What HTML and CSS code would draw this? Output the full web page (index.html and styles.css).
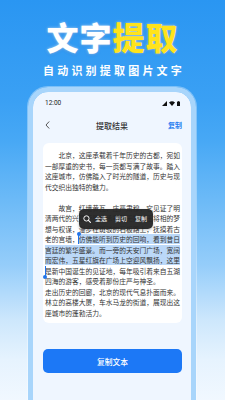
FILE: index.html
```html
<!DOCTYPE html>
<html lang="zh-CN">
<head>
<meta charset="utf-8">
<title>文字提取</title>
<link rel="stylesheet" href="styles.css">
</head>
<body>
<div class="page">
  <header class="hero">
    <h1 class="title">文字<span class="hl">提取</span></h1>
    <p class="subtitle">自动识别提取图片文字</p>
  </header>
  <div class="phone">
    <div class="screen">
      <div class="status">
        <span class="time">12:00</span>
        <span class="status-icons">
          <svg width="5" height="5" viewBox="0 0 10 10"><path d="M10 0V10H0Z" fill="#111"/></svg>
          <svg width="6" height="5" viewBox="0 0 12 10"><path d="M0 3Q6 -2 12 3L6 10Z" fill="#111"/></svg>
          <svg width="3" height="5" viewBox="0 0 6 10"><rect x="0" y="1.2" width="6" height="8.8" rx="1" fill="#111"/><rect x="2" y="0" width="2" height="1.4" fill="#111"/></svg>
        </span>
      </div>
      <div class="nav">
        <svg class="back" width="5" height="8" viewBox="0 0 5 8"><path d="M4.2 0.5L1 4L4.2 7.5" fill="none" stroke="#444" stroke-width="0.9"/></svg>
        <span class="nav-title">提取结果</span>
        <span class="nav-action">复制</span>
      </div>
      <div class="card">
        <p class="para indent">北京，这座承载着千年历史的古都，宛如一部厚重的史书，每一页都写满了故事。踏入这座城市，仿佛踏入了时光的隧道，历史与现代交织出独特的魅力。</p>
        <p class="para indent gap">故宫，红墙黄瓦，庄严肃穆，它见证了明清两代的兴衰荣辱，承载着无数帝王将相的梦想与权谋，漫步在斑驳的石板路上，抚摸着古老的宫墙，<span class="caret caret-start"></span><span class="sel">仿佛能听到历史的回响，看到昔日宫廷的繁华盛景。而一旁的天安门广场，宽阔而宏伟，五星红旗在广场上空迎风飘扬，这里</span><span class="caret caret-end"></span>是新中国诞生的见证地，每年吸引着来自五湖四海的游客，感受着那份庄严与神圣。</p>
        <p class="para">走出历史的回廊，北京的现代气息扑面而来。林立的高楼大厦，车水马龙的街道，展现出这座城市的蓬勃活力。</p>
        <div class="popup">
          <svg class="search" width="8" height="8" viewBox="0 0 10 10"><circle cx="4.3" cy="4.3" r="3.3" fill="none" stroke="#fff" stroke-width="1.2"/><path d="M6.8 6.8L9.3 9.3" stroke="#fff" stroke-width="1.3" stroke-linecap="round"/></svg>
          <span class="pop-item">全选</span>
          <span class="pop-item">剪切</span>
          <span class="pop-item">复制</span>
        </div>
      </div>
      <button class="copy-btn">复制文本</button>
    </div>
  </div>
</div>
</body>
</html>
```

FILE: styles.css
```css
* { box-sizing: border-box; }
html, body { margin: 0; padding: 0; }
body {
  width: 225px;
  height: 400px;
  overflow: hidden;
  font-family: "Noto Sans CJK SC", "Noto Sans", sans-serif;
}
.page {
  width: 225px;
  height: 400px;
  overflow: hidden;
  background: linear-gradient(180deg, #2a96f2 0px, #3aa0f4 100px, #47a8f5 140px, #6cbaf7 200px, #95cdfa 265px, #cde7fc 320px, #e6f3fe 360px, #f1f8ff 400px);
}
.hero {
  padding-top: 18px;
  text-align: center;
}
.title {
  margin: 0;
  font-size: 32px;
  line-height: 36px;
  font-weight: 900;
  color: #fff;
  letter-spacing: 1px;
  text-shadow: 0 0 3px rgba(255,255,255,0.65), 0 1px 3px rgba(0,70,170,0.35);
}
.hl { color: #ffe31c; }
.subtitle {
  margin: 9px 0 0 3px;
  font-size: 11px;
  line-height: 14px;
  font-weight: 700;
  color: #fff;
  letter-spacing: 3.2px;
}
.phone {
  margin: 10px 29px 0 28px;
  height: 320px;
  border: 5px solid #a8d5fb;
  border-bottom: 0;
  border-radius: 20px 20px 0 0;
  box-shadow: 0 0 0 1px rgba(255,255,255,0.35);
}
.screen {
  height: 100%;
  background: #eff6ff;
  border-radius: 15px 15px 0 0;
  overflow: hidden;
}
.status {
  height: 22px;
  padding: 0 11px 0 12px;
  display: flex;
  align-items: center;
  justify-content: space-between;
  font-family: Roboto, "Noto Sans", sans-serif;
  font-size: 6.5px;
  color: #222;
}
.status-icons {
  display: flex;
  align-items: center;
  gap: 2px;
}
.status-icons svg { display: block; }
.nav {
  height: 22px;
  padding: 0 9px 0 12px;
  display: flex;
  align-items: center;
  justify-content: space-between;
}
.back { display: block; }
.nav-title {
  font-size: 8px;
  color: #333;
  font-weight: 500;
  margin-left: 6px;
}
.nav-action {
  font-size: 7px;
  color: #2a7ef0;
  font-weight: 700;
}
.card {
  position: relative;
  margin: 7px 9px 0 10px;
  background: #fff;
  border-radius: 6px;
  padding: 7px 1.5px 5px 2px;
  font-size: 6.75px;
  line-height: 10.5px;
  color: #333;
}
.para { margin: 0; }
.indent { text-indent: 2em; }
.gap { margin-top: 10.5px; }
.sel { background: #bbd8f8; }
.caret { position: relative; }
.caret::before {
  content: "";
  position: absolute;
  left: -0.5px;
  top: 0;
  width: 1px;
  height: 10px;
  background: #1f74ea;
}
.caret::after {
  content: "";
  position: absolute;
  left: -2px;
  width: 4px;
  height: 4px;
  border-radius: 50%;
  background: #1f74ea;
}
.caret-start::after { top: -2px; }
.caret-end::after { top: 9px; }
.popup {
  position: absolute;
  left: 36px;
  top: 66px;
  width: 74px;
  height: 20px;
  background: rgba(38,38,38,0.96);
  border-radius: 5px;
  display: flex;
  align-items: center;
  padding-left: 4px;
  text-indent: 0;
  white-space: nowrap;
  box-shadow: 0 1px 3px rgba(0,0,0,0.25);
}
.search { display: block; flex-shrink: 0; margin-right: 4px; }
.pop-item {
  flex-shrink: 0;
  font-size: 6px;
  line-height: 8px;
  color: #fff;
  margin-right: 8px;
}
.pop-item:last-child { margin-right: 0; }
.copy-btn {
  display: block;
  width: 139px;
  height: 24px;
  margin: 26px 0 0 10px;
  border: 0;
  border-radius: 5px;
  background: #1c78f6;
  color: #fff;
  font-family: "Noto Sans CJK SC", "Noto Sans", sans-serif;
  font-size: 7.75px;
  font-weight: 500;
  padding: 0;
}
```
